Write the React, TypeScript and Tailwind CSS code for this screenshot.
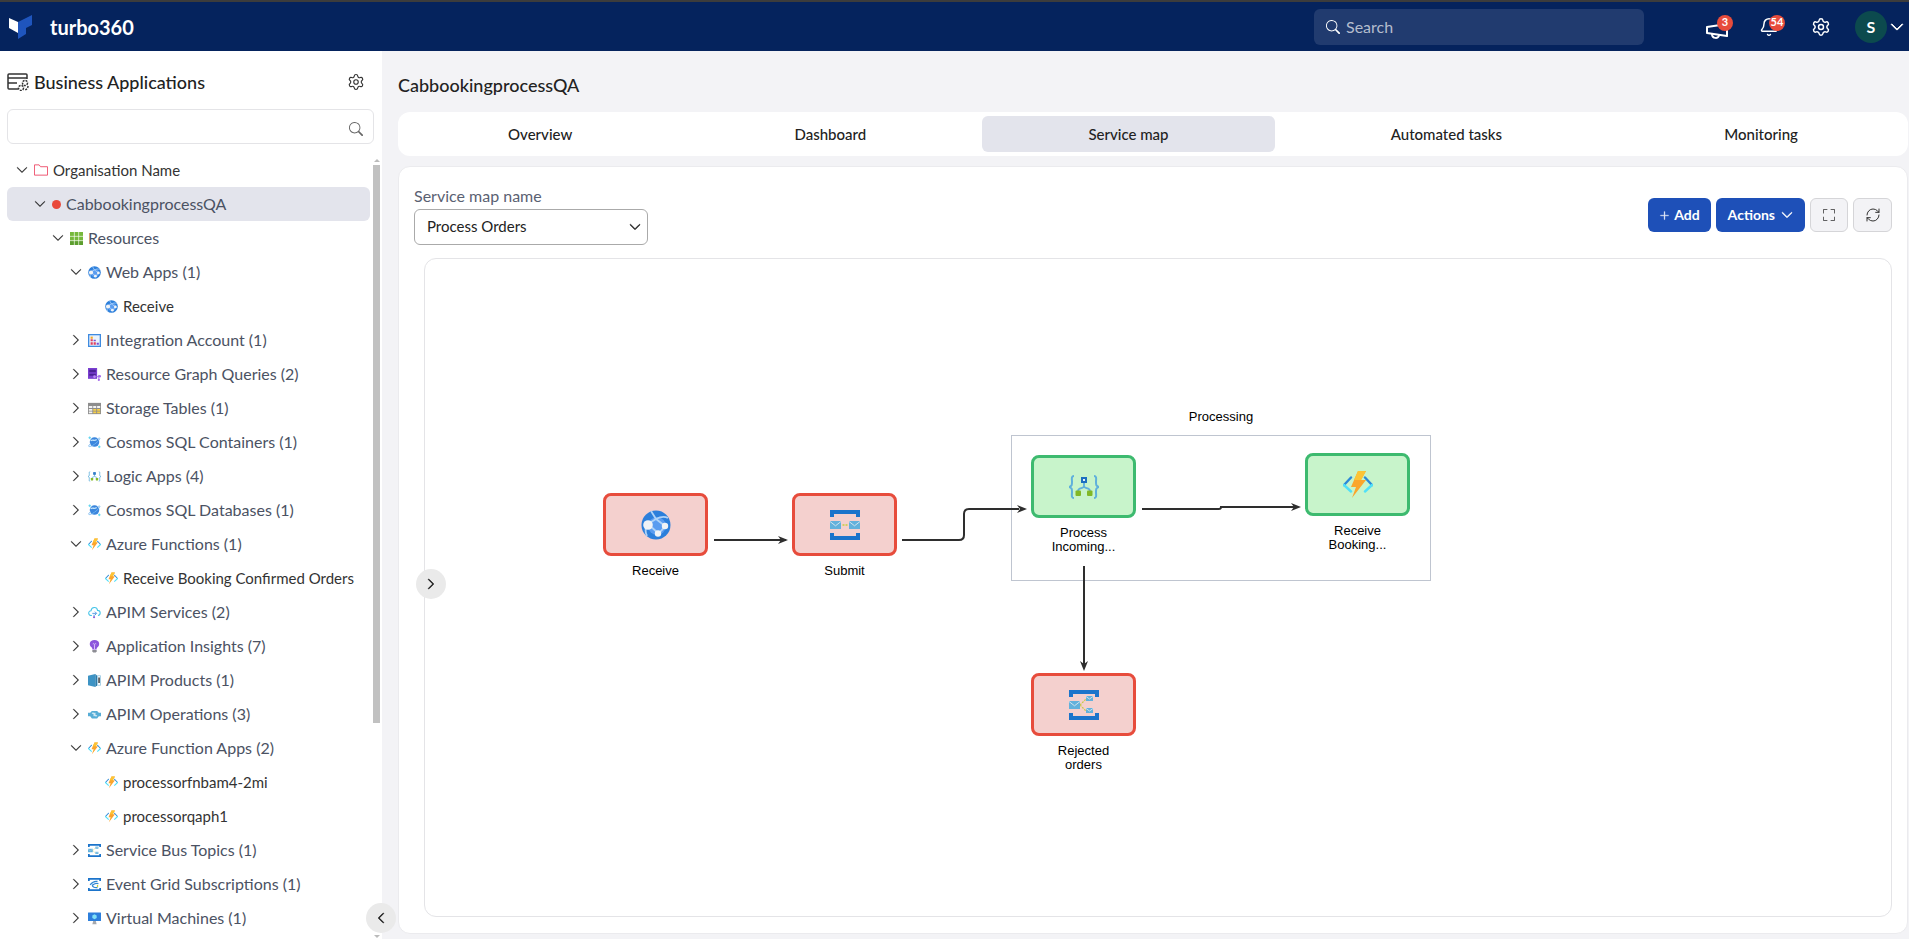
import React from 'react';
import { Bell, RefreshCw, Settings } from 'lucide-react';
import { BsChevronDown, BsChevronLeft, BsChevronRight, BsFullscreen, BsPlusLg, BsSearch } from 'react-icons/bs';

type IconName =
    | 'folder'
    | 'dot'
    | 'grid'
    | 'web'
    | 'integration'
    | 'graph'
    | 'table'
    | 'cosmos'
    | 'logic'
    | 'function'
    | 'apim'
    | 'insights'
    | 'product'
    | 'operation'
    | 'queue'
    | 'topic'
    | 'eventgrid'
    | 'vm';

interface TreeItem {
    label: string;
    icon: IconName;
    depth: 0 | 1 | 2 | 3 | 4;
    open?: boolean;
    selected?: boolean;
}

const TREE: TreeItem[] = [
    { label: 'Organisation Name', icon: 'folder', depth: 0, open: true },
    { label: 'CabbookingprocessQA', icon: 'dot', depth: 1, open: true, selected: true },
    { label: 'Resources', icon: 'grid', depth: 2, open: true },
    { label: 'Web Apps (1)', icon: 'web', depth: 3, open: true },
    { label: 'Receive', icon: 'web', depth: 4 },
    { label: 'Integration Account (1)', icon: 'integration', depth: 3 },
    { label: 'Resource Graph Queries (2)', icon: 'graph', depth: 3 },
    { label: 'Storage Tables (1)', icon: 'table', depth: 3 },
    { label: 'Cosmos SQL Containers (1)', icon: 'cosmos', depth: 3 },
    { label: 'Logic Apps (4)', icon: 'logic', depth: 3 },
    { label: 'Cosmos SQL Databases (1)', icon: 'cosmos', depth: 3 },
    { label: 'Azure Functions (1)', icon: 'function', depth: 3, open: true },
    { label: 'Receive Booking Confirmed Orders', icon: 'function', depth: 4 },
    { label: 'APIM Services (2)', icon: 'apim', depth: 3 },
    { label: 'Application Insights (7)', icon: 'insights', depth: 3 },
    { label: 'APIM Products (1)', icon: 'product', depth: 3 },
    { label: 'APIM Operations (3)', icon: 'operation', depth: 3 },
    { label: 'Azure Function Apps (2)', icon: 'function', depth: 3, open: true },
    { label: 'processorfnbam4-2mi', icon: 'function', depth: 4 },
    { label: 'processorqaph1', icon: 'function', depth: 4 },
    { label: 'Service Bus Topics (1)', icon: 'topic', depth: 3 },
    { label: 'Event Grid Subscriptions (1)', icon: 'eventgrid', depth: 3 },
    { label: 'Virtual Machines (1)', icon: 'vm', depth: 3 }
];

const INDENT = ['pl-[9px]', 'pl-[27px]', 'pl-[45px]', 'pl-[63px]', 'pl-[98px]'];

const TABS = ['Overview', 'Dashboard', 'Service map', 'Automated tasks', 'Monitoring'];

const Brackets = () => (
    <>
        <path d="M0 7V0h30v7h-4V4H4v3z" fill="#1b74cb" />
        <path d="M0 23v7h30v-7h-4v3H4v-3z" fill="#1b74cb" />
    </>
);

const Envelope = ({ x, y, w, h }: { x: number; y: number; w: number; h: number }) => (
    <g>
        <rect x={x} y={y} width={w} height={h} fill="#62b1dc" />
        <path
            d={`M${x} ${y + 0.5}L${x + w / 2} ${y + h * 0.6}L${x + w} ${y + 0.5}`}
            fill="none"
            stroke="#cfe3ee"
            strokeWidth="1"
        />
    </g>
);

const SHAPES: Record<IconName, React.ReactNode> = {
    folder: (
        <path d="M1 26V4h10l3 4h15v18z" fill="none" stroke="#ee4f6b" strokeWidth="2" strokeLinejoin="round" />
    ),
    dot: <circle cx="15" cy="15" r="15" fill="#e9493b" />,
    grid: (
        <>
            {[0, 10.5, 21].map(y =>
                [0, 10.5, 21].map(x => (
                    <rect key={`${x}-${y}`} x={x} y={y} width="9" height="9" fill={y > 15 ? '#5c9e2e' : '#76b83c'} />
                ))
            )}
        </>
    ),
    web: (
        <>
            <circle cx="15" cy="15" r="14.5" fill="#2c7fdb" />
            <circle cx="16" cy="16" r="9" fill="#5a9cf0" />
            <path
                d="M10 1l5 8L7 14M15 9l9 7M15 9c4-2 8-3 12-1M7 14l10 9M7 14c-3 4-3 8-1 12M17 23c3-1 5-4 7-7"
                fill="none"
                stroke="#aed3f8"
                strokeWidth="1.8"
            />
            <circle cx="7" cy="15" r="4.8" fill="#f1f3f6" />
            <circle cx="24" cy="16" r="3.2" fill="#f1f3f6" />
            <circle cx="17" cy="23.5" r="3.2" fill="#f1f3f6" />
        </>
    ),
    integration: (
        <>
            <rect x="1.5" y="1.5" width="27" height="27" fill="#eaf3fc" stroke="#3f8be0" strokeWidth="3" />
            <path d="M6 6h5v5H6z" fill="#f6a723" />
            <path d="M6 12h5v5H6zM6 19h5v6H6zM13 19h5v6h-5z" fill="#e0405e" />
            <path d="M13 13h5v4h-5zM20 20h5v5h-5z" fill="#7b4fd0" />
        </>
    ),
    graph: (
        <>
            <rect width="21" height="25" fill="#7a3fd0" />
            <path d="M3 4h15v6H3zM3 13h15v5H3z" fill="#4a1f94" />
            <path d="M14 20h12M25 16v12" stroke="#9a62e4" strokeWidth="2" />
            <circle cx="15" cy="20" r="3" fill="#b98af2" />
            <circle cx="27" cy="19" r="3" fill="#a56bea" />
            <circle cx="25" cy="27.5" r="2.5" fill="#a56bea" />
        </>
    ),
    table: (
        <>
            <rect y="2" width="30" height="26" fill="#8d8d8d" />
            <path d="M2 9h8v5H2zM12 9h7v5h-7zM21 9h7v5h-7zM2 16h8v4H2zM2 22h8v4H2z" fill="#f3f3f3" />
            <path d="M12 16h7v4h-7zM21 16h7v4h-7zM12 22h7v4h-7zM21 22h7v4h-7z" fill="#f7cf47" />
        </>
    ),
    cosmos: (
        <>
            <circle cx="15" cy="14" r="11" fill="#3b86dd" />
            <path d="M6 11c6-4 8 2 14-3" fill="none" stroke="#bfe2fa" strokeWidth="3" />
            <path d="M6 17C-4 27 5 26 15 19S33 1 23 6" fill="none" stroke="#74b7f1" strokeWidth="2" />
            <path d="M4 1v6M1 4h6M26 22v6M23 25h6" stroke="#4fd0ee" strokeWidth="2" />
        </>
    ),
    logic: (
        <>
            <path
                d="M5 4C2 4 3 7 3 10s0 4-3 5c3 1 3 2 3 5s-1 6 2 6M25 4c3 0 2 3 2 6s0 4 3 5c-3 1-3 2-3 5s1 6-2 6"
                fill="none"
                stroke="#5fb0dc"
                strokeWidth="2"
            />
            <path d="M15 10v4M9 19c0-4 6-2 6-5 0 3 6 1 6 5" fill="none" stroke="#5fb0dc" strokeWidth="1.8" />
            <rect x="13" y="6" width="4" height="4" fill="#dff1fc" stroke="#1c6fc0" strokeWidth="2" />
            <rect x="6.5" y="18.5" width="5.5" height="5.5" rx="1" fill="#82b826" />
            <rect x="18" y="18.5" width="5.5" height="5.5" rx="1" fill="#82b826" />
        </>
    ),
    function: (
        <>
            <path d="M8 7.5l-7 7.5" fill="none" stroke="#2b88d8" strokeWidth="2.4" strokeLinecap="round" />
            <path d="M1 15l7 6.500" fill="none" stroke="#50e0f8" strokeWidth="2.4" strokeLinecap="round" />
            <path d="M22 7.500l7 7.500" fill="none" stroke="#2b88d8" strokeWidth="2.4" strokeLinecap="round" />
            <path d="M29 15l-7 6.500" fill="none" stroke="#50e0f8" strokeWidth="2.4" strokeLinecap="round" />
            <path d="M15 1h8l-5 9h5L9 28l4-11H8z" fill="#fba52c" />
            <path d="M15 1h8l-5 9h-7z" fill="#fcc436" />
        </>
    ),
    apim: (
        <>
            <path
                d="M9 22C-1 22 0 11 7 11 8 1 21 1 22 10c8 0 8 11 1 12"
                fill="none"
                stroke="#45c4e8"
                strokeWidth="2.5"
            />
            <path d="M10 17h9M16 13l4 4-4 4M14 20v7" fill="none" stroke="#3d8fe0" strokeWidth="2" />
            <circle cx="14" cy="26" r="2.5" fill="#8f62d8" />
        </>
    ),
    insights: (
        <>
            <path d="M15 0C2 0 2 13 8 17c2 2 2 3 2 5h10c0-2 0-3 2-5C28 13 28 0 15 0z" fill="#8c55dc" />
            <path d="M11 9c4-4 4 4 4 12 0-8 0-16 4-12" fill="none" stroke="#d9c3f8" strokeWidth="2" />
            <path d="M10 23h10v3l-2 3h-6l-2-3z" fill="#8d8d94" />
        </>
    ),
    product: (
        <>
            <path d="M0 4L17 0v30L0 26z" fill="#3d93c4" />
            <path d="M17 0l4 4v22l-4 4z" fill="#2b7aa9" />
            <path d="M22 4h7v22h-7z" fill="#fff" stroke="#76b6d8" strokeWidth="1.5" />
            <path d="M24 8h3v13h-3z" fill="#222" />
        </>
    ),
    operation: (
        <>
            <path d="M0 11h5l4-4h12l4 4h5v8h-5l-4 5H9l-4-5H0z" fill="#57add6" />
            <path d="M9 12h5v7M21 18h-5v-7" fill="none" stroke="#fff" strokeWidth="2" />
        </>
    ),
    queue: (
        <>
            <Brackets />
            <Envelope x={0} y={11} w={11} h={8} />
            <Envelope x={19} y={11} w={11} h={8} />
            <path d="M12.5 15h5" stroke="#c3cf3c" strokeWidth="1.5" strokeDasharray="2 1" />
        </>
    ),
    topic: (
        <>
            <Brackets />
            <path d="M11 15l6-6M11 15l6 6" stroke="#c9c94c" strokeWidth="1.3" strokeDasharray="2 1" />
            <Envelope x={0} y={11} w={11} h={8} />
            <Envelope x={17} y={6} w={7} h={5} />
            <Envelope x={17} y={18} w={7} h={5} />
        </>
    ),
    eventgrid: (
        <>
            <Brackets />
            <path
                d="M22 8C12 6 8 12 5 16M24 13c-8-2-10 1-14 4M22 22c-6 1-12-1-12-5"
                fill="none"
                stroke="#2f86d3"
                strokeWidth="3"
            />
            <path d="M22 16v5" stroke="#c3cf3c" strokeWidth="3" />
        </>
    ),
    vm: (
        <>
            <rect y="1" width="30" height="20" rx="1" fill="#2d7fdc" />
            <path d="M15 5l5 3v6l-5 3-5-3V8z" fill="#7fe0f6" />
            <path d="M12 21h6l2 7H10z" fill="#a6a9ae" />
        </>
    )
};

const ICON_SIZE: Partial<Record<IconName, string>> = {
    dot: 'mr-[5px] size-[9px]',
    folder: 'mr-[5px] size-[14px]'
};

const ResourceIcon = ({ name, className }: { name: IconName; className: string }) => (
    <svg viewBox="0 0 30 30" className={`shrink-0 ${className}`} aria-hidden="true">
        {SHAPES[name]}
    </svg>
);

const IconButton = ({ label, count, children }: { label: string; count?: number; children: React.ReactNode }) => (
    <button type="button" aria-label={label} className="relative flex size-6 items-center justify-center text-white">
        {children}
        {count !== undefined && (
            <span className="absolute top-0 left-3 flex size-4 items-center justify-center rounded-full bg-[#e74c3c] text-[11px] font-bold">
                {count}
            </span>
        )}
    </button>
);

const Header = () => (
    <header className="flex h-[51px] shrink-0 items-center border-t-2 border-[#3c3c3c] bg-[#05235d] pr-[5px] pl-[9px]">
        <svg viewBox="0 0 23 24" className="h-6 w-[23px]" aria-hidden="true">
            <path d="M0 3l9 4v11l-9-5z" fill="#fff" />
            <path d="M9 7l14-7v10l-6 3v6l-8 5z" fill="#1f55bd" />
        </svg>
        <span className="ml-[18px] text-xl leading-6 font-bold text-white">turbo360</span>

        <label className="ml-auto flex h-9 w-[330px] items-center gap-1.5 rounded-md bg-[#213b6f] px-3">
            <BsSearch className="size-3.5 text-white" />
            <input
                type="search"
                placeholder="Search"
                className="min-w-0 flex-1 bg-transparent text-base text-white outline-none placeholder:text-[#b5bdcd]"
            />
        </label>

        <div className="ml-[61px] flex items-center gap-7">
            <IconButton label="Announcements" count={3}>
                <svg
                    viewBox="0 0 22 16"
                    className="mt-2 h-4 w-[22px] shrink-0"
                    fill="none"
                    stroke="#fff"
                    strokeWidth="2"
                >
                    <path d="M1 4v6l20 3V1z" strokeLinejoin="round" />
                    <path d="M6 11c0 5 7 5 7 1" />
                </svg>
            </IconButton>
            <IconButton label="Notifications" count={54}>
                <Bell className="size-5" strokeWidth={1.75} />
            </IconButton>
            <IconButton label="Settings">
                <Settings className="size-5" strokeWidth={1.75} />
            </IconButton>
        </div>
        <button type="button" aria-label="Account" className="ml-[22px] flex items-center gap-[3px] text-white">
            <span className="flex size-8 items-center justify-center rounded-full bg-[#0c4a4e] text-base font-bold">
                S
            </span>
            <BsChevronDown className="size-3.5" strokeWidth={1} />
        </button>
    </header>
);

const TreeRow = ({ item }: { item: TreeItem }) => (
    <li
        className={`flex h-[34px] items-center rounded-md ${INDENT[item.depth]} ${item.selected ? 'bg-[#e3e4ec]' : ''}`}
    >
        {item.depth < 4 && (
            <button type="button" aria-label={item.open ? 'Collapse' : 'Expand'} className="mr-1.5 text-[#222]">
                {item.open ? (
                    <BsChevronDown className="size-3" strokeWidth={0.5} />
                ) : (
                    <BsChevronRight className="size-3" strokeWidth={0.5} />
                )}
            </button>
        )}
        <ResourceIcon name={item.icon} className={ICON_SIZE[item.icon] ?? 'mr-[5px] size-[13px]'} />
        <a
            href="#"
            className={`whitespace-nowrap ${item.depth === 0 || item.depth === 4 ? 'text-[15px] text-[#333]' : 'text-base text-[#4b5263]'}`}
        >
            {item.label}
        </a>
    </li>
);

const Sidebar = () => (
    <aside className="relative flex w-[382px] shrink-0 flex-col bg-white pl-[7px]">
        <div className="mt-[19px] flex h-6 items-center pr-[17px]">
            <svg viewBox="0 0 22 18" className="h-[18px] w-[22px]" fill="none" stroke="#333" strokeWidth="1.5">
                <path d="M11 16H2a1 1 0 01-1-1V2a1 1 0 011-1h17a1 1 0 011 1v4M1 5h19M1 10h9" />
                <circle cx="18" cy="10" r="2.5" strokeDasharray="2 1" />
                <circle cx="14" cy="15" r="2.5" strokeDasharray="2 1" />
                <path d="M21 13c0 2-1 3-3 4" strokeDasharray="2 1" />
            </svg>
            <h1 className="ml-[5px] text-lg font-medium text-[#222]">Business Applications</h1>
            <button type="button" aria-label="Sidebar settings" className="ml-auto text-[#333]">
                <Settings className="size-[18px]" strokeWidth={1.5} />
            </button>
        </div>

        <label className="mt-[15px] mr-2 flex h-[35px] items-center rounded-md border border-[#e4e4e7] pr-2.5">
            <input
                type="search"
                aria-label="Search applications"
                className="min-w-0 flex-1 bg-transparent px-3 outline-none"
            />
            <BsSearch className="mt-1 size-3.5 text-[#666]" />
        </label>

        <div className="mt-[9px] flex min-h-0 flex-1 overflow-hidden">
            <ul className="mr-[3px] min-w-0 flex-1">
                {TREE.map((item, i) => (
                    <TreeRow key={i} item={item} />
                ))}
            </ul>
            <div className="mr-[2px] flex w-[7px] flex-col items-center pt-1.5 pb-px" aria-hidden="true">
                <div className="mb-[3px] border-x-[3px] border-b-[3px] border-x-transparent border-b-[#bbb]" />
                <div className="h-[558px] w-full bg-[#c1c1c1]" />
                <div className="mt-auto border-x-[3px] border-t-[3px] border-x-transparent border-t-[#bbb]" />
            </div>
        </div>

        <button
            type="button"
            aria-label="Hide sidebar"
            className="absolute -right-[14px] bottom-1.5 z-10 flex size-[30px] items-center justify-center rounded-full bg-[#eaeaea] text-[#111]"
        >
            <BsChevronLeft className="size-3" strokeWidth={1} />
        </button>
    </aside>
);

interface MapNodeProps {
    label: string;
    icon: IconName;
    healthy?: boolean;
    className: string;
}

const MapNode = ({ label, icon, healthy, className }: MapNodeProps) => (
    <div className={`absolute flex w-[105px] flex-col items-center ${className}`}>
        <div
            className={`flex h-[63px] w-full items-center justify-center rounded-lg border-3 ${healthy ? 'border-[#3dba6f] bg-[#c8f4cb]' : 'border-[#e74c3c] bg-[#f4d0ce]'}`}
        >
            <ResourceIcon name={icon} className="size-[30px]" />
        </div>
        <span className="mt-2 w-[70px] text-center font-['Liberation_Sans',sans-serif] text-[13px] leading-[14px] text-black">
            {label}
        </span>
    </div>
);

const ServiceMap = () => (
    <div className="relative min-h-0 flex-1 rounded-xl border border-[#e4e4e7]">
        {/* group around the processing steps */}
        <div className="absolute top-[176px] left-[586px] h-[146px] w-[420px] border border-[#bfc5d0]" />
        <span className="absolute top-[151px] left-[586px] w-[420px] text-center font-['Liberation_Sans',sans-serif] text-[13px] leading-[14px] text-black">
            Processing
        </span>

        <svg
            className="absolute top-0 left-0 h-[660px] w-[1100px]"
            fill="none"
            stroke="#2e2e2e"
            strokeWidth="2"
            aria-hidden="true"
        >
            <path d="M289 281h72M477 281h57q5 0 5-5v-21q0-5 5-5h50M717 250h77q2 0 2-2h74M659 307v99" />
            <g fill="#2e2e2e" stroke="none">
                <path d="M363 281l-10-4 3 4-3 4zM602 250l-10-4 3 4-3 4zM876 248l-10-4 3 4-3 4zM659 412l-4-10 4 3 4-3z" />
            </g>
        </svg>

        <MapNode label="Receive" icon="web" className="top-[234px] left-[178px]" />
        <MapNode label="Submit" icon="queue" className="top-[234px] left-[367px]" />
        <MapNode label="Process Incoming..." icon="logic" healthy className="top-[196px] left-[606px]" />
        <MapNode label="Receive Booking..." icon="function" healthy className="top-[194px] left-[880px]" />
        <MapNode label="Rejected orders" icon="topic" className="top-[414px] left-[606px]" />

        <button
            type="button"
            aria-label="Show panel"
            className="absolute top-[310px] -left-[9px] flex size-[30px] items-center justify-center rounded-full bg-[#eaeaea] text-[#111]"
        >
            <BsChevronRight className="size-3" strokeWidth={1} />
        </button>
    </div>
);

const Toolbar = () => (
    <div className="flex items-start justify-between">
        <div className="flex flex-col">
            <label htmlFor="map-name" className="text-base leading-5 text-[#5a6172]">
                Service map name
            </label>
            <div className="relative mt-[3px]">
                <select
                    id="map-name"
                    className="h-9 w-[234px] appearance-none rounded-md border border-[#aaa] bg-white px-3 pb-0.5 text-[15px] text-[#222]"
                >
                    <option>Process Orders</option>
                </select>
                <BsChevronDown className="pointer-events-none absolute top-3 right-[7px] size-3 text-[#222]" strokeWidth={1} />
            </div>
        </div>
        <div className="mt-3 flex gap-[5px] text-sm font-bold">
            <button type="button" className="flex h-[34px] items-center gap-1 rounded-md bg-[#1e50b8] px-[11px] text-white">
                <BsPlusLg className="size-[11px]" strokeWidth={0.5} />
                Add
            </button>
            <button type="button" className="flex h-[34px] items-center gap-1.5 rounded-md bg-[#1e50b8] px-3 text-white">
                Actions
                <BsChevronDown className="size-3" strokeWidth={1} />
            </button>
            <button
                type="button"
                aria-label="Full screen"
                className="flex h-[34px] w-[38px] items-center justify-center rounded-md border border-[#d5d5d8] bg-[#f3f3f6] text-[#333]"
            >
                <BsFullscreen className="size-3" />
            </button>
            <button
                type="button"
                aria-label="Refresh"
                className="flex h-[34px] w-[39px] items-center justify-center rounded-md border border-[#d5d5d8] bg-[#f3f3f6] text-[#333]"
            >
                <RefreshCw className="size-4" strokeWidth={1.5} />
            </button>
        </div>
    </div>
);

export default function App() {
    return (
        <div className="flex h-screen flex-col overflow-hidden bg-[#f3f3f6] font-[Lato,sans-serif] text-[#222]">
            <Header />
            <div className="flex min-h-0 flex-1">
                <Sidebar />
                <main className="flex min-w-0 flex-1 flex-col pr-px pb-[5px] pl-4">
                    <h2 className="mt-[22px] text-lg leading-6 font-medium">CabbookingprocessQA</h2>
                    <nav className="mt-[15px] flex h-11 gap-2.5 rounded-xl bg-white p-1">
                        {TABS.map(tab => (
                            <button
                                key={tab}
                                type="button"
                                className={`flex-auto rounded-md text-[15px] font-medium ${tab === 'Service map' ? 'bg-[#e3e4ec]' : ''}`}
                            >
                                {tab}
                            </button>
                        ))}
                    </nav>
                    <section className="mt-2.5 flex min-h-0 flex-1 flex-col rounded-xl border border-[#ebebee] bg-white pt-[19px] pr-[15px] pb-4 pl-[15px]">
                        <Toolbar />
                        <div className="mt-[13px] flex min-h-0 flex-1 pl-2.5">
                            <ServiceMap />
                        </div>
                    </section>
                </main>
            </div>
        </div>
    );
}
